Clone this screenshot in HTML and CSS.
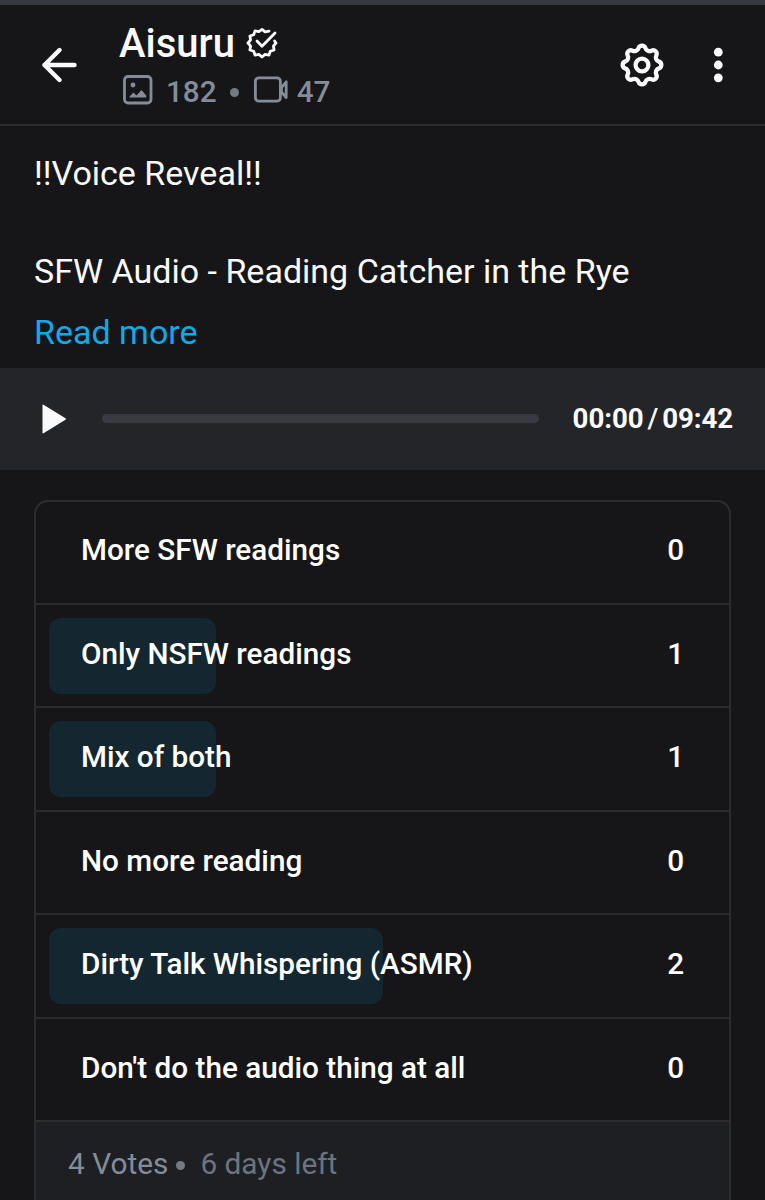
FILE: index.html
```html
<!DOCTYPE html>
<html lang="en">
<head>
    <meta charset="UTF-8">
    <meta name="viewport" content="width=device-width, initial-scale=1.0">
    <title>Aisuru</title>
    <link rel="stylesheet" href="styles.css">
</head>
<body>
    <!-- Header -->
    <header class="header">
        <button class="icon-button back-button" aria-label="Back">
            <svg width="36" height="36" viewBox="0 0 36 36" fill="none" stroke="currentColor" stroke-width="4.4" stroke-linecap="round" stroke-linejoin="round">
                <path d="M33.500 18H3.500M18.500 3L3.500 18l15 15"/>
            </svg>
        </button>
        <div class="profile">
            <div class="profile-name">
                <h1>Aisuru</h1>
                <svg class="verified" width="32" height="32" viewBox="-16 -16 32 32" fill="none" stroke="currentColor" stroke-width="2.8" stroke-linecap="round" stroke-linejoin="round">
                    <path d="M7 -11.8L3.1 -11.2L0 -13.600L-3.1 -11.400L-7 -12.1L-8.3 -8.3L-12.1 -7L-11.4 -3.1L-14 0L-11.4 3.1L-12.1 7L-8.3 8.3L-7 12.1L-3.1 11.4L0 14L3.1 11.4L7 12.1L8.3 8.3L12.1 7L11.4 3.1L14 0L12.6 -2"/>
                    <path d="M-5 -2L0 3.3L13 -10"/>
                </svg>
            </div>
            <div class="stats">
                <svg class="photo-icon" width="30" height="30" viewBox="0 0 30 30" fill="none">
                    <rect x="1.5" y="1.5" width="26.5" height="26.5" rx="3.5" stroke="currentColor" stroke-width="2.8"/>
                    <circle cx="10" cy="10" r="2.4" fill="currentColor"/>
                    <path d="M6.500 22.500v-1L10.500 17.500l3 3 5-5.500 4.700 5.500v2z" fill="currentColor"/>
                </svg>
                <span>182</span>
                <i class="dot"></i>
                <svg class="video-icon" width="34" height="28" viewBox="0 0 34 28" fill="none" stroke="currentColor" stroke-width="2.8" stroke-linejoin="round">
                    <rect x="1.4" y="1.8" width="25" height="23.4" rx="3.5"/>
                    <path d="M27.500 11.500l4.700-5.700v15.800L27.500 16z"/>
                </svg>
                <span>47</span>
            </div>
        </div>
        <button class="icon-button settings-button" aria-label="Settings">
            <svg width="44" height="44" viewBox="-22 -22 44 44" fill="none" stroke="currentColor" stroke-width="4.3">
                <path d="M16.97 -3.38A3.6 3.6 0 0 1 16.97 3.38A4.3 4.3 0 0 0 14.38 9.61A3.6 3.6 0 0 1 9.61 14.38A4.3 4.3 0 0 0 3.38 16.97A3.6 3.6 0 0 1 -3.38 16.97A4.3 4.3 0 0 0 -9.61 14.38A3.6 3.6 0 0 1 -14.38 9.61A4.3 4.3 0 0 0 -16.97 3.38A3.6 3.6 0 0 1 -16.97 -3.38A4.3 4.3 0 0 0 -14.38 -9.61A3.6 3.6 0 0 1 -9.61 -14.38A4.3 4.3 0 0 0 -3.38 -16.97A3.6 3.6 0 0 1 3.38 -16.97A4.3 4.3 0 0 0 9.61 -14.38A3.6 3.6 0 0 1 14.38 -9.61A4.3 4.3 0 0 0 16.97 -3.38Z"/>
                <circle r="6.4"/>
            </svg>
        </button>
        <button class="icon-button" aria-label="More">
            <svg width="10" height="36" viewBox="0 0 10 36" fill="currentColor">
                <circle cx="5.300" cy="5.200" r="4.400"/>
                <circle cx="5.300" cy="18" r="4.400"/>
                <circle cx="5.300" cy="30.800" r="4.400"/>
            </svg>
        </button>
    </header>

    <!-- Post text -->
    <section class="post">
        <p>!!Voice Reveal!!</p>
        <p>SFW Audio - Reading Catcher in the Rye</p>
        <a class="read-more">Read more</a>
    </section>

    <!-- Audio player -->
    <section class="player">
        <svg class="play" width="26" height="30" viewBox="0 0 26 30" fill="currentColor">
            <path d="M0.500 1.200Q0.500 0 1.500 0.700L23.500 14.200Q24.500 15 23.500 15.800L1.500 29.300Q0.500 30 0.500 28.800Z"/>
        </svg>
        <div class="track"></div>
        <div class="time">
            <span>00:00</span>
            <span class="slash">/</span>
            <span>09:42</span>
        </div>
    </section>

    <!-- Poll -->
    <section class="poll">
        <div class="option">
            <span>More SFW readings</span>
            <span>0</span>
        </div>
        <div class="option">
            <div class="result"><div class="bar" style="width: 25%"></div></div>
            <span>Only NSFW readings</span>
            <span>1</span>
        </div>
        <div class="option">
            <div class="result"><div class="bar" style="width: 25%"></div></div>
            <span>Mix of both</span>
            <span>1</span>
        </div>
        <div class="option">
            <span>No more reading</span>
            <span>0</span>
        </div>
        <div class="option">
            <div class="result"><div class="bar" style="width: 50%"></div></div>
            <span>Dirty Talk Whispering (ASMR)</span>
            <span>2</span>
        </div>
        <div class="option">
            <span>Don't do the audio thing at all</span>
            <span>0</span>
        </div>
        <div class="poll-footer">
            <span>4 Votes</span>
            <i class="dot"></i>
            <span class="days-left">6 days left</span>
        </div>
    </section>
</body>
</html>
```

FILE: styles.css
```css
* {
    margin: 0;
    padding: 0;
    box-sizing: border-box;
}

body {
    font-family: Roboto, sans-serif;
    background: #161618;
    color: #fafafc;
    border-top: 5px solid #37383d;
}

svg {
    display: block;
    flex-shrink: 0;
}

/* Header */
.header {
    display: flex;
    align-items: center;
    height: 121px;
    padding: 0 42px 0 41px;
    border-bottom: 2px solid #2b2b2e;
}

.icon-button {
    background: none;
    border: none;
    color: inherit;
}

.back-button {
    margin-right: 42px;
}

.profile {
    flex: 1;
    padding-top: 5px;
}

.profile-name {
    display: flex;
    align-items: center;
    gap: 11px;
    height: 48px;
}

.profile-name h1 {
    font-size: 40px;
    font-weight: 500;
}

.stats {
    display: flex;
    align-items: center;
    height: 48px;
    padding-left: 4px;
    font-size: 29.7px;
    font-weight: 500;
    color: #858c99;
}

.photo-icon {
    margin: -2px 13px 0 0;
}

.video-icon {
    margin: -2px 9px 0 0;
}

.dot {
    width: 9px;
    height: 9px;
    border-radius: 50%;
    background: #737a85;
}

.stats .dot {
    margin: 3px 15px 0 13px;
}

.settings-button {
    margin-right: 49px;
}

/* Post text */
.post {
    height: 242px;
    padding: 23px 34px 0;
    font-size: 34px;
    line-height: 49px;
}

.post p {
    margin-bottom: 49px;
}

.post p + p {
    margin-bottom: 12px;
}

.read-more {
    display: block;
    color: #12a8ea;
}

/* Audio player */
.player {
    display: flex;
    align-items: center;
    height: 102px;
    padding: 0 32px 0 42px;
    background: #242529;
}

.track {
    flex: 1;
    height: 9px;
    margin: -1px 34px 0;
    border-radius: 5px;
    background: #3a3a42;
}

.time {
    display: flex;
    gap: 4px;
    margin-top: -2px;
    font-size: 27.7px;
    font-weight: 700;
    letter-spacing: -0.1px;
}

.slash {
    font-weight: 500;
}

/* Poll */
.poll {
    height: 700px;
    margin: 30px 34px 0;
    border: 2px solid #2c2c2f;
    border-bottom: none;
    border-radius: 14px 14px 0 0;
    overflow: hidden;
}

.option {
    position: relative;
    display: flex;
    justify-content: space-between;
    height: 103.5px;
    padding: 31px 45px 0;
    border-bottom: 2px solid #2c2c2f;
    font-size: 29.7px;
    font-weight: 500;
    line-height: 36px;
    color: #fff;
}

.option:first-child {
    height: 102.5px;
    padding-top: 30px;
}

.option span {
    position: relative;
}

/* Vote share drawn behind the option text */
.result {
    position: absolute;
    top: 13px;
    left: 13px;
    right: 12px;
}

.bar {
    height: 76px;
    border-radius: 12px;
    background: #142731;
}

.poll-footer {
    display: flex;
    align-items: center;
    height: 78px;
    padding: 5px 32px 0;
    background: #1e1f23;
    font-size: 29.8px;
    color: #858c99;
}

.poll-footer .dot {
    margin: 3px 15px 0 8px;
}

.days-left {
    color: #6d747f;
}
```
